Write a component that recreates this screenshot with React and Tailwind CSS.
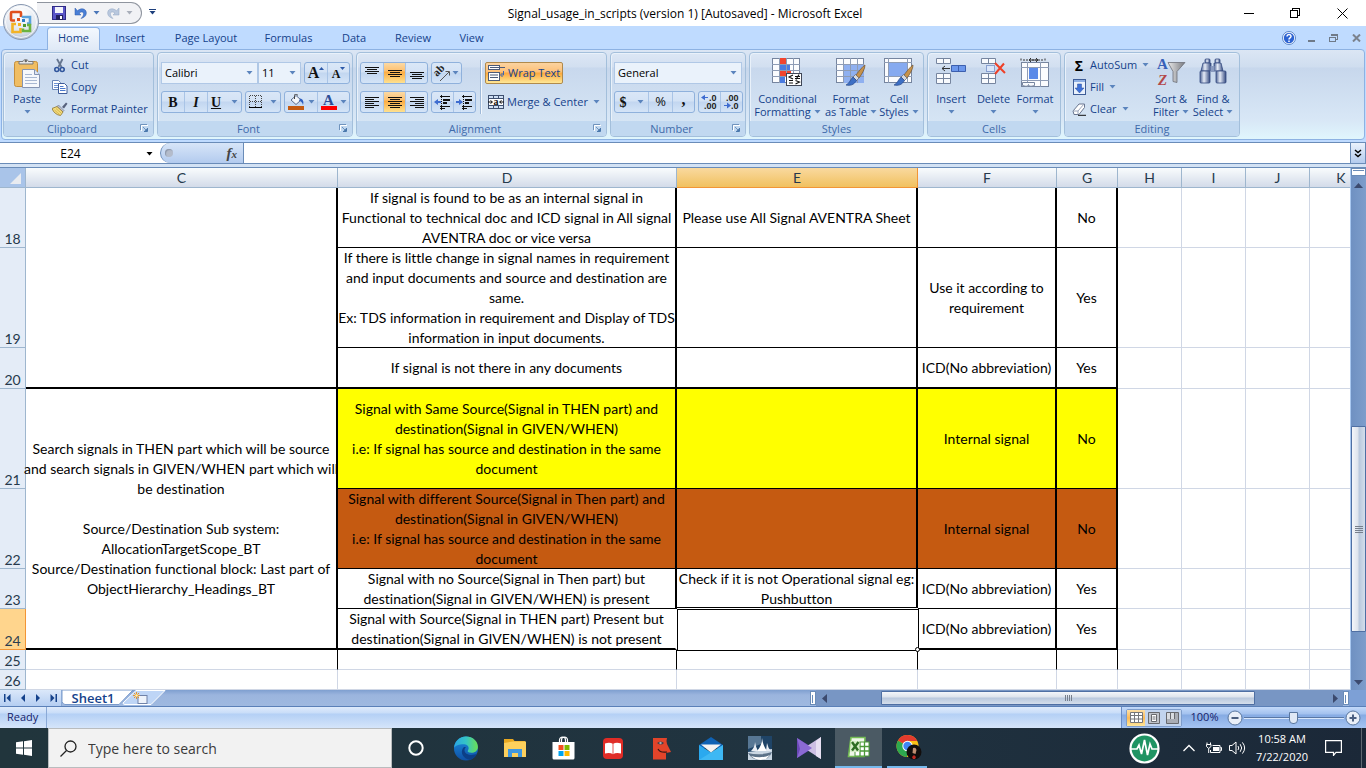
import React from "react";

const UI = "font-['Open_Sans','Noto_Sans',sans-serif]";

/* ---------- small shared pieces ---------- */
const Arrow = ({ className = "text-[#5b84bd]" }) => (
  <svg width="7" height="4" viewBox="0 0 7 4" className={"shrink-0 " + className} aria-hidden="true">
    <path d="M0.5 0h6L3.5 3.6z" fill="currentColor" />
  </svg>
);

const Launcher = ({ name }) => (
  <button aria-label={name + " settings"} className="mr-1 h-[9px] w-[9px]">
    <svg width="9" height="9" viewBox="0 0 9 9" fill="none" stroke="#6f93bd">
      <path d="M0.5 6V0.5H7M3 3l3 3" />
      <path d="M4 7.5h3.5V4" stroke="#4a78ac" />
      <path d="M4.5 7h2.5V4.5z" fill="#4a78ac" stroke="none" />
      <path d="M1.5 7V1.5H8" stroke="#fff" />
    </svg>
  </button>
);

const Group = ({ name, width, launcher, children }) => (
  <section
    aria-label={name}
    className={
      "flex h-[85px] shrink-0 flex-col overflow-hidden rounded-[4px] border border-[#a3bfdb] bg-[linear-gradient(#dce7f5_0,#d2dff0_14px,#c8d8ed_15px,#d9e8f6_100%)] shadow-[inset_1px_1px_0_#e9f1fa] " +
      width
    }
  >
    <div className="flex h-[68px]">{children}</div>
    <div className="flex h-[15px] items-center bg-[#c1d8f0] text-[#3e6aaa]">
      <span className="flex-1 text-center leading-[15px]">{name}</span>
      {launcher && <Launcher name={name} />}
    </div>
  </section>
);

const Segment = ({ className = "", children }) => (
  <div
    className={
      "flex h-[22px] overflow-hidden rounded-[3px] border border-[#8fb1dc] bg-[linear-gradient(#dae7f7_0,#d3e2f5_9px,#c2d6f0_10px,#d4e4f7_100%)] " +
      className
    }
  >
    {children}
  </div>
);

const Seg = ({ label, active, first, width = "w-[22px]", children }) => (
  <button
    aria-label={label}
    className={
      "flex h-full shrink-0 items-center justify-center gap-[3px] text-[#111] " +
      width +
      (first ? "" : " border-l border-[#a9c4e6]") +
      (active ? " bg-[linear-gradient(#fbd9a4_0,#fdc06f_8px,#fbab42_9px,#fee190_100%)]" : "")
    }
  >
    {children}
  </button>
);

const SmallButton = ({ icon, label, drop }) => (
  <button className="flex h-[22px] items-center gap-[3px] whitespace-nowrap">
    <span className="flex w-4 justify-center">{icon}</span>
    <span className="pr-[2px]">{label}</span>
    {drop && <Arrow />}
  </button>
);

const BigButton = ({ icon, lines, width }) => (
  <button className={"flex shrink-0 flex-col items-center pt-[5px] " + width}>
    <span className="flex h-[34px] items-start justify-center">{icon}</span>
    <span className="whitespace-nowrap leading-[13px]">{lines[0]}</span>
    <span className="flex h-[13px] items-center gap-[3px] whitespace-nowrap leading-[13px]">
      {lines[1]}
      <Arrow />
    </span>
  </button>
);

const Combo = ({ label, value, className }) => (
  <div className={"relative h-[22px] border border-[#b0c8e6] bg-[#eaf2fb] " + className}>
    <select aria-label={label} defaultValue={value} className="h-full w-full appearance-none bg-transparent pl-[3px] text-black outline-none">
      <option>{value}</option>
    </select>
    <span className="pointer-events-none absolute right-1 top-2">
      <Arrow />
    </span>
  </div>
);

const Lines = ({ rows, w = 14 }) => (
  <svg width={w} height="14" viewBox={"0 0 " + w + " 14"} shapeRendering="crispEdges" aria-hidden="true">
    {rows.map(([x, y, l], i) => (
      <rect key={i} x={x} y={y} width={l} height="1" fill="#111" />
    ))}
  </svg>
);

/* ---------- ribbon icons ---------- */
const PasteIcon = () => (
  <svg width="28" height="31" viewBox="0 0 28 31">
    <rect x="1.5" y="3.5" width="23" height="25" rx="2" fill="#f0bd62" stroke="#c58f3c" />
    <path d="M6 6V3.5h4C10 1 15 1 15.500 3.500H20V6z" fill="#e9e9e9" stroke="#777" />
    <circle cx="12.800" cy="3" r="1.200" fill="#666" />
    <path d="M9.500 11.500h12l5 5v13h-17z" fill="#f6f8fc" stroke="#8594b3" />
    <path d="M21.500 11.500v5h5" fill="#dfe6f2" stroke="#8594b3" />
    <path d="M12 16.500h7M12 19.500h12M12 22.500h12M12 25.500h12" stroke="#a9b8d2" />
  </svg>
);
const CutIcon = () => (
  <svg width="12" height="15" viewBox="0 0 12 15" fill="none">
    <path d="M3 1l4.500 8M8.500 1L4.500 9" stroke="#66768f" strokeWidth="1.800" />
    <circle cx="2.800" cy="11.500" r="2" stroke="#31569c" strokeWidth="1.600" />
    <circle cx="8.200" cy="11.500" r="2" stroke="#31569c" strokeWidth="1.600" />
  </svg>
);
const CopyIcon = () => (
  <svg width="16" height="14" viewBox="0 0 16 14">
    <path d="M.5.5h6l2 2v7h-8z" fill="#fff" stroke="#6b86b8" />
    <path d="M2 3.500h4M2 5.500h5M2 7.500h5" stroke="#6f93d4" />
    <path d="M6.500 3.500h6l2.500 2.500v7.500H6.500z" fill="#fff" stroke="#3e5c9a" />
    <path d="M8 6.500h3.500M8 8.500h5.500M8 10.500h5.500" stroke="#4a78cc" />
  </svg>
);
const BrushIcon = () => (
  <svg width="16" height="14" viewBox="0 0 16 14">
    <path d="M10 5l4-4.500 1.500 1.300L12 6.500z" fill="#56617c" />
    <path d="M6.500 3l5.500 5.500-1.500 1.500L5 4.500z" fill="#b9bfd0" stroke="#6b7285" strokeWidth=".6" />
    <path d="M5 4.500l6 5.500-2.500 3.500C4.500 13 1.500 10.500 0 6.500z" fill="#f3dc7c" stroke="#8d7430" strokeWidth=".8" />
    <path d="M2.500 8l5 4.500M4 6.500l5 4.500" stroke="#c8a641" strokeWidth=".7" />
  </svg>
);
const GridIcon = () => (
  <svg width="14" height="14" viewBox="0 0 14 14" shapeRendering="crispEdges" fill="none">
    <path d="M1 .5h12M1 6.500h12M.5 1v11M6.500 1v11M12.500 1v11" stroke="#444" strokeDasharray="1 1" />
    <path d="M0 12.500h13" stroke="#000" />
  </svg>
);
const BucketIcon = () => (
  <svg width="17" height="16" viewBox="0 0 17 16">
    <path d="M3 6l5-4.500 5 4.500-5 4.500z" fill="#f4f7fb" stroke="#5a6c8d" />
    <path d="M6.500 5V1.500a1.500 1.500 0 013 0" fill="none" stroke="#444" />
    <path d="M12 4.500c3 .5 4 3 3 6.500-1-3-2-4-4-4z" fill="#2e5fc0" />
    <rect y="12" width="16" height="4" fill="#c55a11" />
  </svg>
);
const FontColorIcon = () => (
  <span className="flex flex-col items-center font-['Liberation_Serif',serif] text-[15px] font-bold leading-[12px] text-[#2c4d96]">
    A
    <span className="h-[4px] w-4 bg-[#ff0000]" />
  </span>
);
const OrientIcon = () => (
  <svg width="17" height="17" viewBox="0 0 17 17" fill="none" className="overflow-visible">
    <text x="3" y="12" transform="rotate(-45 3 12)" fontFamily="Liberation Serif, serif" fontSize="11" fontWeight="bold" fill="#222">ab</text>
    <path d="M6 16l9-9M15.500 10.500V6.500h-4" stroke="#555" />
  </svg>
);
const IndentIcon = ({ right }) => (
  <svg width="17" height="15" viewBox="0 0 17 15" shapeRendering="crispEdges">
    <path d="M6 1.500h10M6 13.500h5M6 11.500h10" stroke="#111" />
    <path d="M9 5h7M9 8h4" stroke="#111" strokeWidth="2" />
    <path d="M7.500 0v15" stroke="#111" strokeDasharray="1 1" />
    <path d={right ? "M0 6h3V4l4 3-4 3V8H0z" : "M7 6H4V4L0 7l4 3V8h3z"} fill="#3e6cd0" shapeRendering="auto" />
  </svg>
);
const WrapIcon = () => (
  <svg width="17" height="16" viewBox="0 0 17 16" fill="none">
    <rect x=".5" y=".5" width="11" height="4" fill="#fff" stroke="#4b5a78" />
    <path d="M2 2.500h15" stroke="#4b5a78" />
    <rect x=".5" y="7.500" width="11" height="8" fill="#fff" stroke="#4b5a78" />
    <path d="M2 10h8M2 12.500h8" stroke="#4b5a78" strokeWidth="1.200" />
    <path d="M15.500 6v4h-2M14.500 8l-2 2 2 2" stroke="#3a65b5" />
  </svg>
);
const MergeIcon = () => (
  <svg width="16" height="14" viewBox="0 0 16 14">
    <rect x=".5" y=".5" width="15" height="13" fill="#cfe0f5" stroke="#3f506f" />
    <path d="M0 3.500h16M0 10.500h16M5.500 0v3M10.500 0v3M5.500 11v3M10.500 11v3" stroke="#3f506f" />
    <rect x="1" y="4" width="14" height="6" fill="#fff" />
    <path d="M0 7h4M12 7h4M2.500 5.500L4.500 7l-2 1.500M13.500 5.500L11.500 7l2 1.500" stroke="#111" fill="none" />
    <text x="5.500" y="9.500" fontFamily="Liberation Serif, serif" fontSize="10" fontWeight="bold" fill="#111">a</text>
  </svg>
);
const DecimalIcon = ({ inc }) => (
  <svg width="17" height="16" viewBox="0 0 17 16" fontFamily="Liberation Sans, sans-serif" fontSize="9" fontWeight="bold" fill="#222" className="overflow-visible">
    <text x={inc ? 8 : 3} y="7">{inc ? ".0" : ".00"}</text>
    <text x={inc ? 3 : 8} y="15">{inc ? ".00" : ".0"}</text>
    <path d={inc ? "M7 3H4V.8L0 3.500l4 2.700V4h3z" : "M1 11h3V8.500l4 3-4 3V12H1z"} fill="#3e6cd0" />
  </svg>
);
const SheetBase = ({ children, cols = [7.5, 14.5, 21.5], rows = [6.5, 12.5, 18.5] }) => (
  <>
    <rect x=".5" y=".5" width="27" height="24" fill="#fbfcfe" stroke="#76859f" />
    {children}
    <path d={cols.map((c) => `M${c} 0v25`).join("") + rows.map((r) => `M0 ${r}h28`).join("")} stroke="#8e9cb5" fill="none" />
  </>
);
const PaintBrush = () => (
  <g>
    <path d="M29 7c-2 1-6 6-9 10l3 3c3-4 6-9 6-13z" fill="#c7924b" stroke="#6d5230" strokeWidth=".7" />
    <path d="M19.500 16.500l3.500 3.500-2.500 2.500-3.500-3.500z" fill="#d6d8de" stroke="#5e6470" strokeWidth=".7" />
    <path d="M17 19l3.500 3.500C18 27 14 28 10 27c3-1 4-5 7-8z" fill="#3d6fc4" stroke="#28498a" strokeWidth=".7" />
  </g>
);
const CondIcon = () => (
  <svg width="31" height="29" viewBox="0 0 31 29">
    <SheetBase>
      <rect x="7" y="0" width="7" height="6" fill="#f2452e" />
      <rect x="7" y="6" width="11" height="6" fill="#4a7be0" />
      <rect x="7" y="12" width="12" height="6" fill="#f2452e" />
      <rect x="7" y="18" width="6" height="7" fill="#4a7be0" />
    </SheetBase>
    <rect x="14.500" y="15.500" width="15" height="12" fill="#fff" stroke="#3f4656" />
    <path d="M21 17l-4 2 4 2M17 22.500h4M17 25h4M23 18.500h5M23 20.500h5M27 16.500l-3 5M23.500 22.500l4 1.500-4 2" stroke="#111" fill="none" strokeWidth="1.100" />
  </svg>
);
const TableIcon = () => (
  <svg width="30" height="29" viewBox="0 0 30 29">
    <SheetBase>
      <rect x="7" y="7" width="21" height="18" fill="#8fb0f0" />
    </SheetBase>
    <PaintBrush />
  </svg>
);
const StylesIcon = () => (
  <svg width="30" height="29" viewBox="0 0 30 29">
    <SheetBase cols={[4.500, 23.500]} rows={[4.500, 18.500]}>
      <rect x="5" y="5" width="18" height="13" fill="#86aaf0" />
    </SheetBase>
    <PaintBrush />
  </svg>
);
const CellsPair = () => (
  <g fill="#f8fafd" stroke="#76859f">
    <path d="M.5.5h14v5H.5zM7.500.5v5M.5 15.500h14v10H.5zM7.500 15.500v10M.5 20.500h14" />
  </g>
);
const InsertIcon = () => (
  <svg width="31" height="28" viewBox="0 0 31 28">
    <CellsPair />
    <path d="M15.500 7.500h14v6h-14zM22.500 7.500v6" fill="#6b97ec" stroke="#3c5fae" />
    <path d="M6 10.500h8M9 8l-3 2.500L9 13" stroke="#333" fill="none" />
  </svg>
);
const DeleteIcon = () => (
  <svg width="25" height="28" viewBox="0 0 25 28">
    <CellsPair />
    <path d="M5.500 7.500h8v6h-8z" fill="#dbe7fa" stroke="#3c5fae" strokeDasharray="1 1" />
    <path d="M14 5l10 10M23 5.500L14 16" stroke="#ee4028" strokeWidth="2" />
  </svg>
);
const FormatIcon = () => (
  <svg width="31" height="30" viewBox="0 0 31 30">
    <path d="M1 .5v3M25 .5v3M3 2h20" stroke="#333" strokeDasharray="2 1" />
    <path d="M9 2h8M11 0L9 2l2 2M16 0l2 2-2 2" stroke="#333" fill="none" />
    <g transform="translate(1 4)">
      <SheetBase cols={[6.500, 19.500]} rows={[5.500, 18.500]}>
        <rect x="8" y="6" width="9" height="11" fill="#5b8ae8" />
      </SheetBase>
    </g>
    <path d="M2.500 27.500q6 2 6-1 0 3 6 1v-3h-12z" fill="#f8fafd" stroke="#76859f" />
  </svg>
);
const SortIcon = () => (
  <svg width="30" height="29" viewBox="0 0 30 29" className="overflow-visible">
    <defs>
      <linearGradient id="fun" x1="0" x2="1"><stop stopColor="#e8e8e8" /><stop offset="1" stopColor="#77797f" /></linearGradient>
    </defs>
    <text x="1" y="11" fontFamily="Liberation Serif, serif" fontSize="15" fontWeight="bold" fill="#3560b8">A</text>
    <text x="2" y="27" fontFamily="Liberation Serif, serif" fontSize="15" fontStyle="italic" fontWeight="bold" fill="#b34848">Z</text>
    <path d="M12 4.500h17l-8 9v11l-4-1v-10z" fill="url(#fun)" stroke="#6d7078" strokeWidth=".8" />
  </svg>
);
const BinocIcon = () => (
  <svg width="28" height="27" viewBox="0 0 28 27">
    <defs>
      <linearGradient id="bin" x1="0" x2="1"><stop stopColor="#4c6294" /><stop offset=".4" stopColor="#e6ecf7" /><stop offset="1" stopColor="#344a80" /></linearGradient>
    </defs>
    {[0, 15].map((x) => (
      <g key={x} transform={`translate(${x} 0)`} fill="url(#bin)" stroke="#344a80" strokeWidth=".8">
        <rect x={x ? 1 : 6} y="1" width="5" height="4" rx="1" />
        <path d={x ? "M0 5h7l2 8H0z" : "M4 5h8v8H2z"} />
        <rect x={x ? 2 : 1} y="13" width="10" height="12" rx="1" />
      </g>
    ))}
    <rect x="11.500" y="8" width="4" height="6" fill="#8a9bc0" />
  </svg>
);
const FillIcon = () => (
  <svg width="13" height="16" viewBox="0 0 13 16">
    <rect x=".5" y=".5" width="12" height="15" fill="#e9f1fc" stroke="#3d5c97" />
    <path d="M1 2h11" stroke="#8fb0e4" strokeWidth="2" />
    <path d="M4.500 5h4v4h2.500l-4.500 5L2 9h2.500z" fill="#3f72d8" stroke="#2a4f9d" strokeWidth=".5" />
  </svg>
);
const EraserIcon = () => (
  <svg width="14" height="13" viewBox="0 0 14 13">
    <path d="M1 8l6-7h5.500v3.500L7 11.500H2z" fill="#fff" stroke="#6a7690" />
    <path d="M1 8h5l6-7M6 8v3.500" stroke="#9aa5bb" fill="none" />
    <path d="M6 12.300h8" stroke="#111" />
  </svg>
);

/* ---------- top area ---------- */
const OfficeButton = () => (
  <button aria-label="Office Button" className="absolute left-[2px] top-[3px] z-20 h-[38px] w-[38px]">
    <svg width="38" height="38" viewBox="0 0 38 38" fill="none">
      <defs>
        <radialGradient id="orb" cx=".5" cy=".25" r=".9"><stop stopColor="#fff" /><stop offset=".6" stopColor="#dfe5ee" /><stop offset="1" stopColor="#8e9fb8" /></radialGradient>
      </defs>
      <circle cx="19" cy="19" r="17.500" fill="url(#orb)" stroke="#8797b0" />
      <circle cx="19" cy="19" r="15.500" stroke="#fff" opacity=".8" />
      <g strokeWidth="2.600">
        <path d="M13 17.500H10a1 1 0 01-1-1V10a1 1 0 011-1h8a1 1 0 011 1v4" stroke="#e0501d" />
        <path d="M21 15v-1h7v6.500h-3" stroke="#5aa2dc" />
        <path d="M14 21h-3.500v8h8v-4" stroke="#f3b325" />
        <path d="M21 25.500v2.500h7v-6h-3" stroke="#6cb33f" />
      </g>
      <g>
        <rect x="15" y="15" width="3" height="3" fill="#e0501d" />
        <rect x="20" y="16" width="3" height="3" fill="#2f7dc8" />
        <rect x="16" y="20" width="3" height="3" fill="#f3b325" />
        <rect x="21" y="21" width="3" height="3" fill="#4e9a2e" />
      </g>
    </svg>
  </button>
);

const TitleBar = () => (
  <header className="relative flex h-[26px] shrink-0 items-start bg-white">
    <OfficeButton />
    <div className="ml-[37px] mt-[2px] flex h-[22px] w-[105px] items-center rounded-r-full rounded-tl-none border border-l-0 border-[#8f959f] bg-[#f1f2f5] pl-[15px]">
      <button aria-label="Save" className="mr-2">
        <svg width="14" height="14" viewBox="0 0 14 14">
          <rect x=".5" y=".5" width="13" height="13" fill="#5a55c8" stroke="#2f2b86" />
          <rect x="3" y="1" width="8" height="6" fill="#f2f3fb" />
          <rect x="4" y="9" width="7" height="5" fill="#23205e" />
          <rect x="8" y="10" width="2" height="3" fill="#fff" />
        </svg>
      </button>
      <button aria-label="Undo" className="flex items-center gap-[6px]">
        <svg width="13" height="12" viewBox="0 0 13 12"><path d="M1 1v7h6L5 6c3-2 5-1 4.500 1.500C9.200 9 8.500 10 7 11.500c4-1 5.500-3.500 5.300-6C12 1.500 7 .5 3.500 3.800z" fill="#4a7fd6" stroke="#2d59a8" strokeWidth=".5" /></svg>
        <Arrow className="text-[#4a76b8]" />
      </button>
      <button aria-label="Redo" className="ml-[7px] flex items-center gap-[6px]">
        <svg width="13" height="12" viewBox="0 0 13 12"><path d="M12 1v7H6l2-2C5 4 3 5 3.500 7.500c.3 1.500 1 2.500 2.500 4C2 10.500.5 8 .7 5.500 1 1.500 6 .5 9.500 3.800z" fill="#b9c8de" stroke="#93a6c2" strokeWidth=".5" /></svg>
        <Arrow className="text-[#a9afba]" />
      </button>
    </div>
    <button aria-label="Customize Quick Access Toolbar" className="ml-[7px] mt-[9px] flex flex-col gap-px text-[#1d3f7c]">
      <span className="h-px w-[7px] bg-[#1d3f7c]" />
      <Arrow className="text-[#1d3f7c]" />
    </button>
    <h1 className="absolute inset-x-0 top-0 pl-1 text-center text-[12px] leading-[27px] text-black">
      Signal_usage_in_scripts (version 1) [Autosaved] - Microsoft Excel
    </h1>
    <div className="relative ml-auto flex h-full items-center">
      <button aria-label="Minimize" className="flex h-full w-[46px] items-center justify-center">
        <span className="h-px w-[10px] bg-black" />
      </button>
      <button aria-label="Restore" className="flex h-full w-[46px] items-center justify-center">
        <svg width="10" height="10" viewBox="0 0 10 10" fill="none" stroke="#000" shapeRendering="crispEdges"><path d="M.5 2.500h7v7h-7zM2.500 2V.5h7v7H8" /></svg>
      </button>
      <button aria-label="Close" className="flex h-full w-[48px] items-center justify-center">
        <svg width="11" height="11" viewBox="0 0 11 11" stroke="#000"><path d="M.5.5l10 10M10.500.5l-10 10" /></svg>
      </button>
    </div>
  </header>
);

const TABS = [
  ["Home", "w-[53px]"],
  ["Insert", "w-[60px]"],
  ["Page Layout", "w-[92px]"],
  ["Formulas", "w-[73px]"],
  ["Data", "w-[58px]"],
  ["Review", "w-[60px]"],
  ["View", "w-[57px]"],
];

const TabBar = () => (
  <nav aria-label="Ribbon tabs" className="flex h-[23px] shrink-0 items-end bg-[#bfdbff] pl-[47px] pr-1 text-[#15428b]">
    {TABS.map(([t, w], i) => (
      <button
        key={t}
        className={
          "relative whitespace-nowrap text-center " +
          w +
          (i === 0
            ? " z-10 -mb-px h-[23px] rounded-t-[4px] border border-b-0 border-[#8db2e3] bg-[linear-gradient(#f3f8fe,#dfe9f6)] pb-[3px] leading-[19px]"
            : " h-[22px] leading-[20px]")
        }
      >
        {t}
      </button>
    ))}
    <div className="ml-auto flex h-full items-center text-[#6f7a88]">
      <button aria-label="Help" className="mr-[12px] flex">
        <svg width="14" height="14" viewBox="0 0 14 14">
          <circle cx="7" cy="7" r="6.500" fill="#fff" stroke="#5b86c8" />
          <circle cx="7" cy="7" r="5.200" fill="#2d63d2" />
          <path d="M5 5.500C5 2.800 9.200 3 9 5.500 8.800 7 7 6.800 7 8.500M7 9.500v1.600" stroke="#fff" strokeWidth="1.500" fill="none" />
        </svg>
      </button>
      <button aria-label="Minimize workbook" className="mr-[14px] mt-[6px] h-[2px] w-[7px] bg-[#6f7a88]" />
      <button aria-label="Restore workbook" className="mr-[14px]">
        <svg width="9" height="8" viewBox="0 0 9 8" fill="none" stroke="#6f7a88" shapeRendering="crispEdges"><path d="M.5 3.500h6v4h-6zM.5 3h6M2 .5h6.500v5H7M2 1h6.500" /></svg>
      </button>
      <button aria-label="Close workbook" className="mr-px">
        <svg width="9" height="8" viewBox="0 0 9 8" stroke="#7b828d" strokeWidth="2"><path d="M1 .5l7 7M8 .5l-7 7" /></svg>
      </button>
    </div>
  </nav>
);

const Ribbon = () => (
  <div className="shrink-0 bg-[#bfdbff] px-px pb-[2px]">
    <div className="flex h-[91px] gap-[3px] overflow-hidden rounded-[4px] border border-[#8db2e3] bg-[linear-gradient(#dbe6f4_0,#cfddef_17px,#c7d7ec_18px,#d8e7f6_70px,#e0f6fd_100%)] pl-px pt-[2px] text-[#15428b]">
      <Group name="Clipboard" width="w-[151px]" launcher>
        <BigButton width="w-[46px]" icon={<PasteIcon />} lines={["Paste", ""]} />
        <div className="ml-[2px] flex flex-col pt-px">
          <SmallButton icon={<CutIcon />} label="Cut" />
          <SmallButton icon={<CopyIcon />} label="Copy" />
          <SmallButton icon={<BrushIcon />} label="Format Painter" />
        </div>
      </Group>

      <Group name="Font" width="w-[196px]" launcher>
        <div className="flex flex-col gap-[7px] pl-[3px] pt-[9px]">
          <div className="flex">
            <Combo label="Font" value="Calibri" className="w-[97px]" />
            <Combo label="Font size" value="11" className="w-[43px]" />
            <Segment className="ml-[3px]">
              <Seg first label="Increase font size">
                <span className="font-['Liberation_Serif',serif] text-[16px] font-bold leading-none">A</span>
                <svg width="5" height="3" viewBox="0 0 5 3" className="-ml-[3px] -mt-[10px]"><path d="M0 3h5L2.500 0z" fill="#2d59a8" /></svg>
              </Seg>
              <Seg label="Decrease font size">
                <span className="pt-[2px] font-['Liberation_Serif',serif] text-[12px] font-bold leading-none">A</span>
                <svg width="5" height="3" viewBox="0 0 5 3" className="-ml-[3px] -mt-[10px]"><path d="M0 0h5L2.500 3z" fill="#2d59a8" /></svg>
              </Seg>
            </Segment>
          </div>
          <div className="flex gap-[3px] font-['Liberation_Serif',serif] text-[14px] font-bold">
            <Segment>
              <Seg first label="Bold">B</Seg>
              <Seg label="Italic" width="w-[23px]"><i>I</i></Seg>
              <Seg label="Underline" width="w-[34px]"><u>U</u><span className="w-1" /><Arrow /></Seg>
            </Segment>
            <Segment>
              <Seg first label="Borders" width="w-[34px]"><GridIcon /><span className="w-px" /><Arrow /></Seg>
            </Segment>
            <Segment>
              <Seg first label="Fill colour" width="w-[32px]"><BucketIcon /><Arrow /></Seg>
              <Seg label="Font colour" width="w-[32px]"><FontColorIcon /><Arrow /></Seg>
            </Segment>
          </div>
        </div>
      </Group>

      <Group name="Alignment" width="w-[251px]" launcher>
        <div className="flex flex-col gap-[7px] pl-[3px] pt-[9px]">
          <div className="flex gap-[3px]">
            <Segment>
              <Seg first label="Top align"><Lines rows={[[0, 1, 14], [2, 3, 10], [0, 5, 14], [2, 7, 10]]} /></Seg>
              <Seg active label="Middle align"><Lines rows={[[0, 4, 14], [2, 6, 10], [0, 8, 14], [2, 10, 10]]} /></Seg>
              <Seg label="Bottom align"><Lines rows={[[0, 6, 14], [2, 8, 10], [0, 10, 14], [2, 12, 10]]} /></Seg>
            </Segment>
            <Segment><Seg first label="Orientation" width="w-[29px]"><OrientIcon /><Arrow className="-ml-[2px] text-[#5b84bd]" /></Seg></Segment>
          </div>
          <div className="flex gap-[3px]">
            <Segment>
              <Seg first label="Align left"><Lines rows={[[0, 2, 14], [0, 4, 9], [0, 6, 14], [0, 8, 9], [0, 10, 14], [0, 12, 9]]} /></Seg>
              <Seg active label="Centre"><Lines rows={[[0, 2, 14], [2, 4, 10], [0, 6, 14], [2, 8, 10], [0, 10, 14], [2, 12, 10]]} /></Seg>
              <Seg label="Align right"><Lines rows={[[0, 2, 14], [5, 4, 9], [0, 6, 14], [5, 8, 9], [0, 10, 14], [5, 12, 9]]} /></Seg>
            </Segment>
            <Segment>
              <Seg first label="Decrease indent" width="w-[21px]"><IndentIcon /></Seg>
              <Seg label="Increase indent"><IndentIcon right /></Seg>
            </Segment>
          </div>
        </div>
        <div className="ml-1 mt-[7px] h-[54px] w-px bg-[#9fb9d8] shadow-[1px_0_0_#f4f8fd]" />
        <div className="ml-[4px] flex flex-col items-start gap-[7px] pt-[9px]">
          <button className="flex h-[22px] items-center gap-[3px] whitespace-nowrap rounded-[2px] border border-[#b08a4c] bg-[linear-gradient(#fbd3a0_0,#fdc077_9px,#fca83c_10px,#fee796_100%)] px-[2px]">
            <WrapIcon />
            Wrap Text
          </button>
          <button className="flex h-[22px] items-center gap-[3px] whitespace-nowrap pl-[3px]">
            <MergeIcon />
            Merge &amp; Center
            <Arrow className="ml-[2px] text-[#5b84bd]" />
          </button>
        </div>
      </Group>

      <Group name="Number" width="w-[136px]" launcher>
        <div className="flex flex-col gap-[7px] pl-[3px] pt-[9px]">
          <Combo label="Number format" value="General" className="w-[128px]" />
          <div className="flex gap-[3px]">
            <Segment>
              <Seg first label="Currency" width="w-[33px]"><b className="font-['Liberation_Serif',serif] text-[14px]">$</b><span className="w-1" /><Arrow /></Seg>
              <Seg label="Percent" width="w-[24px]"><span className="text-[13px]">%</span></Seg>
              <Seg label="Comma"><b className="pb-1 font-['Liberation_Serif',serif] text-[16px] leading-[16px]">,</b></Seg>
            </Segment>
            <Segment>
              <Seg first label="Increase decimal" width="w-[21px]"><DecimalIcon inc /></Seg>
              <Seg label="Decrease decimal"><DecimalIcon /></Seg>
            </Segment>
          </div>
        </div>
      </Group>

      <Group name="Styles" width="w-[175px]">
        <BigButton width="w-[75px]" icon={<CondIcon />} lines={["Conditional", "Formatting"]} />
        <BigButton width="w-[52px]" icon={<TableIcon />} lines={["Format", "as Table"]} />
        <BigButton width="w-[44px]" icon={<StylesIcon />} lines={["Cell", "Styles"]} />
      </Group>

      <Group name="Cells" width="w-[134px]">
        <BigButton width="w-[46px]" icon={<InsertIcon />} lines={["Insert", ""]} />
        <BigButton width="w-[39px]" icon={<DeleteIcon />} lines={["Delete", ""]} />
        <BigButton width="w-[44px]" icon={<FormatIcon />} lines={["Format", ""]} />
      </Group>

      <Group name="Editing" width="w-[176px]">
        <div className="flex w-[85px] flex-col pl-[6px] pt-px">
          <SmallButton icon={<b className="text-[14px] text-black">Σ</b>} label="AutoSum" drop />
          <SmallButton icon={<FillIcon />} label="Fill" drop />
          <SmallButton icon={<EraserIcon />} label="Clear" drop />
        </div>
        <BigButton width="w-[42px]" icon={<SortIcon />} lines={["Sort &", "Filter"]} />
        <BigButton width="w-[42px]" icon={<BinocIcon />} lines={["Find &", "Select"]} />
      </Group>
    </div>
  </div>
);

const FormulaBar = () => (
  <div className="shrink-0 border-t border-[#6a8cb8] bg-[#d3e2f4] pb-[3px]">
    <div className="flex h-[21px] border-b border-[#6a8cb8] bg-white">
      <div className="relative w-[160px]">
        <input aria-label="Name box" defaultValue="E24" className="h-full w-[141px] bg-transparent text-center text-[12px] text-black outline-none" />
        <span className="absolute right-[7px] top-[9px]"><Arrow className="text-black" /></span>
      </div>
      <div className="flex w-[84px] items-center justify-between rounded-l-full border-l border-r border-[#6a8cb8] bg-[linear-gradient(#d7e5f8,#b3cbee)] pl-1 pr-1">
        <span className="h-2 w-2 rounded-full bg-[#b4bccb] shadow-[inset_1px_1px_1px_#8c97aa]" />
        <button aria-label="Insert function" className="pr-[2px] font-['Liberation_Serif',serif] text-[15px] italic leading-none text-[#444]">
          <b>f</b><span className="text-[11px]"><b>x</b></span>
        </button>
      </div>
      <input aria-label="Formula bar" className="min-w-0 flex-1 bg-white px-1 outline-none" />
      <button aria-label="Expand formula bar" className="flex w-4 items-center justify-center border-x border-[#6a8cb8] bg-[linear-gradient(#eaf2fc,#b3cbee)]">
        <svg width="8" height="9" viewBox="0 0 8 9" fill="none" stroke="#000" strokeWidth="1.500"><path d="M1 1l3 2.500L7 1M1 5l3 2.500L7 5" /></svg>
      </button>
    </div>
  </div>
);

/* ---------- worksheet ---------- */
const T = ({ lines }) => (
  <div className="-mb-px flex flex-col items-center whitespace-nowrap">
    {lines.map((l, i) => (
      <span key={i} className="h-[20px]">{l}</span>
    ))}
  </div>
);

const ICD = ["ICD(No abbreviation)"];
const YELLOW = "bg-[#ffff00]";
const BROWN = "bg-[#c55a11]";

const ROWS = [
  { n: 18, h: "h-[60px]", d: ["If signal is found to be as an internal signal in", "Functional to technical doc and ICD signal in All signal", "AVENTRA doc or vice versa"], e: ["Please use All Signal AVENTRA Sheet"], f: [], g: "No" },
  { n: 19, h: "h-[100px]", d: ["If there is little change in signal names in requirement", "and input documents and source and destination are", "same.", "Ex: TDS information in requirement and Display of TDS", "information in input documents."], e: [], f: ["Use it according to", "requirement"], g: "Yes" },
  { n: 20, h: "h-[41px]", thick: true, d: ["If signal is not there in any documents"], e: [], f: ICD, g: "Yes" },
  { n: 21, h: "h-[100px]", fill: YELLOW, d: ["Signal with Same Source(Signal in THEN part) and", "destination(Signal in GIVEN/WHEN)", "i.e: If signal has source and destination in the same", "document"], e: [], f: ["Internal signal"], g: "No" },
  { n: 22, h: "h-[80px]", fill: BROWN, d: ["Signal with different Source(Signal in Then part) and", "destination(Signal in GIVEN/WHEN)", "i.e: If signal has source and destination in the same", "document"], e: [], f: ["Internal signal"], g: "No" },
  { n: 23, h: "h-[40px]", d: ["Signal with no Source(Signal in Then part) but", "destination(Signal in GIVEN/WHEN) is present"], e: ["Check if it is not Operational signal eg:", "Pushbutton"], f: ICD, g: "Yes" },
  { n: 24, h: "h-[41px]", thick: true, selected: true, d: ["Signal with Source(Signal in THEN part) Present but", "destination(Signal in GIVEN/WHEN) is not present"], e: [], f: ICD, g: "Yes" },
];

const C_TEXT = [
  "Search signals in THEN part which will be source",
  "and search signals in GIVEN/WHEN part which will",
  "be destination",
  "",
  "Source/Destination Sub system:",
  "AllocationTargetScope_BT",
  "Source/Destination functional block: Last part of",
  "ObjectHierarchy_Headings_BT",
];

const RowHead = ({ n, selected }) => (
  <th
    scope="row"
    className={
      "border-b border-r p-0 align-bottom font-normal leading-[17px] " +
      (selected ? "border-[#f29536] bg-[#ffd58d] text-[#2b3d4f]" : "border-[#9eb6ce] bg-[#e4ecf7] text-[#26394c]")
    }
  >
    {n}
  </th>
);

const GRID = "border-b border-r border-[#d0d7e5] p-0";

const Sheet = () => (
  <div className="min-w-0 flex-1 overflow-hidden bg-white">
    <table className="w-full table-fixed border-separate border-spacing-0 text-center font-['Lato','Carlito',sans-serif] text-[14px] leading-[20px] text-black [font-variant-ligatures:none]">
      <colgroup>
        <col className="w-[26px]" />
        <col className="w-[312px]" />
        <col className="w-[339px]" />
        <col className="w-[241px]" />
        <col className="w-[139px]" />
        <col className="w-[61px]" />
        <col className="w-[64px]" />
        <col className="w-[64px]" />
        <col className="w-[64px]" />
        <col />
      </colgroup>
      <thead>
        <tr className="h-[20px]">
          <th className="border-b border-r border-[#9eb6ce] bg-[#a9c4e9] p-0 leading-none">
            <button aria-label="Select all" className="flex h-[18px] w-full items-end justify-end pb-[3px] pr-1">
              <svg width="11" height="11" viewBox="0 0 11 11"><path d="M11 0v11H0z" fill="#e8ebf0" /></svg>
            </button>
          </th>
          {["C", "D", "E", "F", "G", "H", "I", "J", "K"].map((c) => (
            <th
              key={c}
              scope="col"
              className={
                "h-[20px] border-b border-r p-0 font-normal leading-[19px] " +
                (c === "E" ? "border-[#f29536] bg-[linear-gradient(#f9d99f,#f1c15f)] text-[#26394c]" : "border-[#9eb6ce] bg-[linear-gradient(#f9fcfd,#d3dbe9)] text-[#26394c]") +
                (c === "K" ? " border-r-0 pl-[22px]" : "")
              }
            >
              {c}
            </th>
          ))}
        </tr>
      </thead>
      <tbody>
        {ROWS.map((r) => {
          const b = "relative border-black p-0 " + (r.thick ? "border-b-2 " : "border-b ") + (r.fill || "");
          return (
            <tr key={r.n} className={r.h}>
              <RowHead n={r.n} selected={r.selected} />
              {r.n === 18 && <td rowSpan={3} className="border-b-2 border-r-2 border-black p-0" />}
              {r.n === 21 && (
                <td rowSpan={4} className="relative z-10 border-b-2 border-r-2 border-black p-0">
                  <T lines={C_TEXT} />
                </td>
              )}
              <td className={b + " border-r-2" + (r.selected ? " border-r-white" : "")}><T lines={r.d} /></td>
              {r.selected ? (
                <td className="relative bg-white p-0">
                  <span className="absolute -bottom-px -right-px left-0 top-0 border border-black" />
                  <span className="absolute -top-px left-0 h-px w-full bg-white" />
                  <span className="absolute -top-[2px] left-0 h-px w-full bg-black" />
                  <span className="absolute -bottom-[2px] -right-[2px] z-10 h-[5px] w-[5px] rounded-full border border-black bg-white" />
                </td>
              ) : (
                <td className={b + " border-r-2"}><T lines={r.e} /></td>
              )}
              <td className={b + " border-r-2"}><T lines={r.f} /></td>
              <td className={b + " border-r-2"}><T lines={[r.g]} /></td>
              <td className={GRID} />
              <td className={GRID} />
              <td className={GRID} />
              <td className={GRID + " border-r-0"} />
            </tr>
          );
        })}
        {[25, 26].map((n) => (
          <tr key={n} className="h-[20px]">
            <RowHead n={n} />
            {[0, 1, 2, 3, 4, 5, 6, 7, 8].map((c) => (
              <td key={c} className={GRID + (n === 25 && c < 5 ? " border-r-black" : "") + (c === 8 ? " border-r-0" : "")} />
            ))}
          </tr>
        ))}
      </tbody>
    </table>
  </div>
);

const VScroll = () => (
  <div aria-label="Vertical scroll" className="flex w-[16px] shrink-0 flex-col items-center border-l border-[#a9c8f0] bg-[linear-gradient(90deg,#6f91c2,#7d9dcb)]">
    <div className="h-2 w-full border border-[#6a8cb8] bg-white p-px"><div className="h-[2px] border-t border-[#6a8cb8]" /></div>
    <button aria-label="Scroll up" className="flex h-[18px] items-center"><svg width="9" height="5" viewBox="0 0 9 5"><path d="M4.500 0L9 5H0z" fill="#3c4a6e" /></svg></button>
    <div className="flex-[233]" />
    <div className="flex w-[15px] flex-[205] items-center justify-center rounded-[1px] border border-[#4f6fa3] bg-[linear-gradient(90deg,#f4f6fa_0,#dde3ec_6px,#b9c8dd_7px,#d4deeb_100%)]">
      <div className="flex w-2 flex-col gap-px">
        <i className="h-px bg-[#777f8c]" /><i className="h-px bg-[#777f8c]" /><i className="h-px bg-[#777f8c]" /><i className="h-px bg-[#777f8c]" />
      </div>
    </div>
    <div className="flex-[43]" />
    <button aria-label="Scroll down" className="flex h-[15px] items-center"><svg width="9" height="5" viewBox="0 0 9 5"><path d="M4.500 5L9 0H0z" fill="#3c4a6e" /></svg></button>
  </div>
);

const NavBtn = ({ label, d }) => (
  <button aria-label={label} className="flex flex-1 items-center justify-center">
    <svg width="8" height="8" viewBox="0 0 8 8"><path d={d} fill="#15428b" /></svg>
  </button>
);

const SheetTabs = () => (
  <div className="flex h-[17px] shrink-0 border-b border-[#5b80b8] bg-[linear-gradient(#7f9fd0_0,#9bb5de_5px,#9fb9e0_100%)]">
    <div className="flex w-[62px] items-center border-r border-[#8aa9d6] bg-[linear-gradient(#dbe8fa,#b5cef2)]">
      <NavBtn label="First sheet" d="M0 0h1.500v8H0zM6.500 0v8l-4-4z" />
      <NavBtn label="Previous sheet" d="M6 0v8L2 4z" />
      <NavBtn label="Next sheet" d="M2 0v8l4-4z" />
      <NavBtn label="Last sheet" d="M6.500 0H8v8H6.500zM1.500 0v8l4-4z" />
    </div>
    <div className="relative flex w-[104px]">
      <svg width="104" height="16" viewBox="0 0 104 16" className="absolute inset-0" aria-hidden="true">
        <path d="M0 0h71L57 14.500H3q-2 0-3-3z" fill="#fff" stroke="#7b9bcb" />
        <path d="M61 13L74 .5h29L89 14.500H63q-2 0-2-1.500z" fill="#bed5f6" stroke="#fff" />
      </svg>
      <button className="relative w-[62px] text-center text-[13px] font-semibold leading-[16px] text-[#15428b]">Sheet1</button>
      <button aria-label="Insert worksheet" className="relative ml-[9px]">
        <svg width="15" height="13" viewBox="0 0 15 13">
          <rect x="5" y="3.500" width="9" height="8" fill="#eef3fb" stroke="#7082a8" />
          <path d="M3.500 0v7M0 3.500h7M1 1l5 5M6 1L1 6" stroke="#e9952a" />
          <circle cx="3.500" cy="3.500" r="1.300" fill="#fff3b0" />
        </svg>
      </button>
    </div>
    <div className="flex-[646]" />
    <div className="my-px w-[6px] border border-[#6a8cb8] bg-white"><div className="ml-px mt-[3px] h-2 w-px bg-[#6a8cb8]" /></div>
    <div className="flex flex-[528] items-center bg-[#7896c4]">
      <button aria-label="Scroll left" className="flex w-4 justify-center"><svg width="5" height="9" viewBox="0 0 5 9"><path d="M0 4.500L5 0v9z" fill="#3c4a6e" /></svg></button>
      <div className="flex-[49]" />
      <div className="flex h-[14px] flex-[372] items-center justify-center gap-px rounded-[1px] border border-[#4f6fa3] bg-[linear-gradient(#f4f6fa_0,#dde3ec_5px,#b9c8dd_6px,#d4deeb_100%)]">
        <i className="h-[6px] w-px bg-[#777f8c]" /><i className="h-[6px] w-px bg-[#777f8c]" /><i className="h-[6px] w-px bg-[#777f8c]" /><i className="h-[6px] w-px bg-[#777f8c]" />
      </div>
      <div className="flex-[72]" />
      <button aria-label="Scroll right" className="flex w-4 justify-center"><svg width="5" height="9" viewBox="0 0 5 9"><path d="M5 4.500L0 0v9z" fill="#3c4a6e" /></svg></button>
    </div>
    <div className="my-px w-[6px] border border-[#6a8cb8] bg-white"><div className="ml-px mt-[3px] h-2 w-px bg-[#6a8cb8]" /></div>
    <div className="w-[17px] bg-[#7da0d6]" />
  </div>
);

const StatusBar = () => (
  <footer className="flex h-[21px] shrink-0 bg-[linear-gradient(#dfebfb_0,#c9ddf8_6px,#b4d0f5_7px,#d5e5fa_100%)] text-[11px] text-[#15226b]">
    <div className="w-[47px] border-r border-[#8aa9d6] pl-[7px] leading-[20px]">Ready</div>
    <div className="flex-1" />
    <div className="flex w-[245px] items-center border-l border-[#6a8cc4] bg-[linear-gradient(#c3dafa_0,#a3c1ee_7px,#86abe3_8px,#a5c4f2_100%)] pl-[4px]">
      <div className="flex h-[18px] rounded-[2px] border border-[#7e9dcb]">
        <button aria-label="Normal view" className="flex w-[18px] items-center justify-center bg-[linear-gradient(#fde0a8,#fdb955_50%,#fee79c)]">
          <svg width="13" height="11" viewBox="0 0 13 11"><path d="M.5.500h12v10H.5zM4.500 0v11M8.500 0v11M0 3.500h13M0 7h13" fill="#fff" stroke="#76777a" /></svg>
        </button>
        <button aria-label="Page layout view" className="flex w-[18px] items-center justify-center bg-[#c2d4ee]">
          <svg width="12" height="12" viewBox="0 0 12 12"><path d="M.5.500h11v11H.5z" fill="#bfc3ca" stroke="#67696e" /><path d="M3.500 2.500h5v7h-5z" fill="#fff" stroke="#67696e" /><path d="M4.500 5h3M4.500 7h3" stroke="#67696e" /></svg>
        </button>
        <button aria-label="Page break preview" className="flex w-[18px] items-center justify-center bg-[#c2d4ee]">
          <svg width="13" height="12" viewBox="0 0 13 12"><path d="M.5.500h12v11H.5z" fill="#d9dce1" stroke="#67696e" /><path d="M1 7h7V1h4v10H1z" fill="#a9adb5" /><path d="M4.500 1v6M8.500 1v6" stroke="#67696e" /></svg>
        </button>
      </div>
      <span className="w-[45px] text-center">100%</span>
      <button aria-label="Zoom out" className="flex shrink-0">
        <svg width="16" height="16" viewBox="0 0 16 16"><circle cx="8" cy="8" r="7" fill="#e9eff8" stroke="#58769f" /><path d="M4.500 8h7" stroke="#4b5f80" strokeWidth="2" /></svg>
      </button>
      <input
        type="range"
        aria-label="Zoom"
        defaultValue="49"
        className="mx-px h-4 w-[100px] appearance-none bg-[linear-gradient(transparent_7px,#5877a5_7px,#5877a5_8px,#d9e7fb_8px,#d9e7fb_9px,transparent_9px)] [&::-webkit-slider-thumb]:h-[12px] [&::-webkit-slider-thumb]:w-[9px] [&::-webkit-slider-thumb]:appearance-none [&::-webkit-slider-thumb]:rounded-b-[4px] [&::-webkit-slider-thumb]:border [&::-webkit-slider-thumb]:border-[#58769f] [&::-webkit-slider-thumb]:bg-[#dfe8f5]"
      />
      <button aria-label="Zoom in" className="flex shrink-0">
        <svg width="16" height="16" viewBox="0 0 16 16"><circle cx="8" cy="8" r="7" fill="#e9eff8" stroke="#58769f" /><path d="M4.500 8h7M8 4.500v7" stroke="#4b5f80" strokeWidth="2" /></svg>
      </button>
    </div>
  </footer>
);

/* ---------- taskbar ---------- */
const EdgeIcon = () => (
  <svg width="24" height="25" viewBox="0 0 24 25">
    <defs>
      <linearGradient id="eg" x1="0" x2="1"><stop stopColor="#2aa6e4" /><stop offset=".5" stopColor="#35c4c6" /><stop offset="1" stopColor="#6bdf52" /></linearGradient>
      <linearGradient id="eb" x1="0" y1="0" x2="0" y2="1"><stop stopColor="#1b8fe0" /><stop offset="1" stopColor="#0f4fa3" /></linearGradient>
    </defs>
    <circle cx="12" cy="12.500" r="12" fill="url(#eb)" />
    <path d="M.1 12C.5 5 6 .5 12 .5c7 0 12 5 11.900 10.500-.1 4-3.400 5.800-6.400 5.800-3.300 0-4.500-1.300-3.500-2.600 1.700-2.200.3-5.700-3.800-6C6 8 1 9.500.1 12z" fill="url(#eg)" />
    <path d="M9 12c-3 5 0 10.500 7 12 3-.8 6-3.500 7-6.500-4 2.500-12 2-12.500-3 0-1.500.5-2.500 1.500-3.200-1-.8-2.500 0-3 .7z" fill="#0c3f87" />
  </svg>
);
const FolderIcon = () => (
  <svg width="22" height="19" viewBox="0 0 22 19">
    <path d="M0 0h9l1.500 2H21v16H0z" fill="#e9a820" />
    <path d="M0 4l9-1.500h13V18H0z" fill="#fdd05c" />
    <path d="M4 10h14v8h-4v-4H8v4H4z" fill="#3f97e0" />
  </svg>
);
const StoreIcon = () => (
  <svg width="23" height="24" viewBox="0 0 23 24">
    <path d="M7.500 6V4a3 3 0 016 0v2M9.500 6V4a3 3 0 016 0v2" fill="none" stroke="#fff" strokeWidth="1.200" />
    <path d="M.5 6h22v16q0 1.500-1.500 1.500H2Q.5 23.500.5 22z" fill="#fff" />
    <path d="M6.500 9h5v5h-5z" fill="#f25022" /><path d="M12.500 9h5v5h-5z" fill="#7fba00" /><path d="M6.500 15h5v5h-5z" fill="#00a4ef" /><path d="M12.500 15h5v5h-5z" fill="#ffb900" />
  </svg>
);
const BookIcon = () => (
  <svg width="20" height="21" viewBox="0 0 20 21">
    <rect width="20" height="21" rx="4" fill="#e02c26" />
    <path d="M2 5.500q5-1.500 8 .5 3-2 8-.5v10q-5-1.200-8 .8-3-2-8-.8z" fill="#fff" />
    <path d="M10 6v10.500" stroke="#e02c26" strokeWidth=".8" />
  </svg>
);
const FaceIcon = () => (
  <svg width="19" height="23" viewBox="0 0 19 23">
    <path d="M1 1h14q-1 3 0 6l4 8-5 1v6.500H1z" fill="#e2442a" />
    <path d="M5 6q4-3 7 0-3 3-7 0z" fill="#3b3f4c" /><circle cx="8.500" cy="6" r="1.200" fill="#aaa" />
    <path d="M6 12q2 4 9 3" stroke="#3a1613" fill="none" strokeWidth="1.200" />
  </svg>
);
const MailIcon = () => (
  <svg width="24" height="23" viewBox="0 0 24 23">
    <path d="M0 8L12 0l12 8v3H0z" fill="#0f62b4" />
    <path d="M0 8l12 7.500L24 8v15H0z" fill="#2aa9ef" />
    <path d="M0 23L24 8v15z" fill="#4cc3f7" opacity=".6" />
    <path d="M2 7.500h20L12 15.500z" fill="#f3f3f3" />
  </svg>
);
const SailIcon = () => (
  <svg width="24" height="24" viewBox="0 0 24 24">
    <rect width="24" height="24" fill="#c9d6e2" />
    <path d="M0 0h24v13L0 16z" fill="#1f4467" />
    <path d="M0 0h13v8L0 13z" fill="#7d9ab3" opacity=".6" />
    <path d="M14 2q1 8 5 13h-10q5-5 5-13z" fill="#fff" /><path d="M7 6q1 6 3 9H3q4-4 4-9zM19 7q1 5 4 8h-5z" fill="#e8edf3" />
    <path d="M0 17q12 3 24-1-3 8-12 8Q4 24 0 17z" fill="#5c7288" /><path d="M3 20q10 3 19-1l-4 4q-8 3-15-3z" fill="#fff" />
  </svg>
);
const VsIcon = () => (
  <svg width="24" height="22" viewBox="0 0 24 22">
    <path d="M0 1l13 8v4L0 21z" fill="#6b48b8" /><path d="M24 0L10 9v4l14 9z" fill="#cdbfe3" /><path d="M0 1l15 10L0 21l3-9z" fill="#8b6ad3" /><path d="M24 0v22l-5-3V4z" fill="#e8e0f2" />
  </svg>
);
const ExcelIcon = () => (
  <svg width="23" height="23" viewBox="0 0 23 23">
    <path d="M4 1.500h14l-1 19H1.500z" fill="#eef7e8" stroke="#74bc55" strokeWidth="1.600" />
    <rect x="8" y="6" width="14" height="14" fill="#fff" stroke="#4c9a38" />
    <path d="M8 10.500h14M8 15h14M13 6v14M17.500 6v14" stroke="#4c9a38" strokeWidth="1.300" />
    <path d="M3.500 5h9v11h-9z" fill="#d8efc9" /><path d="M5 6l6 8.500M11.500 6L5 14.500" stroke="#2d6e23" strokeWidth="2.400" />
  </svg>
);
const ChromeIcon = () => (
  <svg width="26" height="26" viewBox="0 0 26 26">
    <circle cx="11.500" cy="12" r="11" fill="#fbc116" />
    <path d="M11.500 12L2 6.500A11 11 0 0011 23z" fill="#2da94f" />
    <path d="M2 6.500A11 11 0 0121.200 7H11.500v5z" fill="#e33b2e" />
    <circle cx="11.500" cy="12" r="5.200" fill="#fff" /><circle cx="11.500" cy="12" r="4.200" fill="#4086f4" />
    <circle cx="18" cy="18" r="7.500" fill="#120e0d" /><path d="M17 14q3-1 3.500 2l-1 4-3-1z" fill="#c08f72" /><path d="M16 23l2-2 2 2-1 2h-2z" fill="#c22a22" />
  </svg>
);

const APPS = [
  ["Edge", EdgeIcon],
  ["File Explorer", FolderIcon],
  ["Microsoft Store", StoreIcon],
  ["Reader", BookIcon],
  ["Face", FaceIcon],
  ["Mail", MailIcon],
  ["Sail", SailIcon],
  ["Visual Studio", VsIcon],
];

const Taskbar = () => (
  <div className="flex h-10 shrink-0 bg-[linear-gradient(90deg,#21353c,#203340_60%,#1b2838)] text-white">
    <button aria-label="Start" className="flex w-12 items-center justify-center">
      <svg width="16" height="16" viewBox="0 0 16 16" fill="#fff"><path d="M0 2.300L7 1.300v6.300H0zM8 1.200L16 0v7.600H8zM0 8.500h7v6.300l-7-1zM8 8.500h8V16l-8-1.200z" /></svg>
    </button>
    <label className="flex w-[344px] items-center border border-[#b9bcbe] bg-[#f2f2f2] pl-[11px]">
      <svg width="17" height="17" viewBox="0 0 17 17" fill="none" stroke="#222" strokeWidth="1.300"><circle cx="10.500" cy="6.500" r="5.500" /><path d="M6.500 10.500L.5 16.500" /></svg>
      <input type="search" aria-label="Search" placeholder="Type here to search" className="ml-[11px] min-w-0 flex-1 bg-transparent text-[14px] outline-none placeholder:text-[#3b3b3b]" />
    </label>
    <button aria-label="Cortana" className="flex w-[48px] items-center justify-center">
      <svg width="16" height="16" viewBox="0 0 16 16" fill="none" stroke="#fff" strokeWidth="2"><circle cx="8" cy="8" r="6.700" /></svg>
    </button>
    {APPS.map(([name, Icon]) => (
      <button key={name} aria-label={name} className="flex w-[49px] items-center justify-center pl-[2px]"><Icon /></button>
    ))}
    <button aria-label="Excel" className="ml-[3px] flex w-[47px] items-center justify-center border-b-2 border-[#76b9ed] bg-[#4b5a64]"><ExcelIcon /></button>
    <button aria-label="Chrome" className="ml-[5px] flex w-[40px] items-center justify-center border-b-2 border-[#76b9ed] pl-1"><ChromeIcon /></button>
    <div className="ml-auto flex items-center">
      <button aria-label="Monitor" className="mr-[23px]">
        <svg width="31" height="31" viewBox="0 0 31 31" fill="none"><circle cx="15.500" cy="15.500" r="14" fill="#1f9463" stroke="#fff" strokeWidth="2.200" /><path d="M2 16h6l2-4 2.500 9L15.500 7l3 15 2.500-11 2 5h6" stroke="#fff" strokeWidth="1.700" /></svg>
      </button>
      <button aria-label="Show hidden icons" className="mr-[11px]">
        <svg width="12" height="8" viewBox="0 0 12 8" fill="none" stroke="#fff" strokeWidth="1.300"><path d="M.5 7L6 1.500 11.500 7" /></svg>
      </button>
      <button aria-label="Battery" className="mr-[7px]">
        <svg width="16" height="12" viewBox="0 0 16 12" fill="none" stroke="#fff"><path d="M6.500 3.500h7.500v7H4.500V8M14.500 5.500h1v3h-1" /><path d="M7 5h6v4H7z" fill="#fff" stroke="none" /><path d="M1 .5v2M4.500.5v2M.5 2.500h4.500v2L2.700 6.500.5 4.500zM2.700 6.500V11" /></svg>
      </button>
      <button aria-label="Volume" className="mr-[8px]">
        <svg width="17" height="14" viewBox="0 0 17 14" fill="none" stroke="#fff"><path d="M.5 4.500h2.500l4-3.500v12l-4-3.500H.5zM9 5q1.500 2 0 4M11.200 3.200q3 3.800 0 7.600M13.400 1.400q4.500 5.600 0 11.200" /></svg>
      </button>
      <div className="w-[56px] whitespace-nowrap text-center text-[11px] leading-[18px]">
        <div>10:58 AM</div>
        <div>7/22/2020</div>
      </div>
      <button aria-label="Notifications" className="ml-[15px] mr-[19px]">
        <svg width="17" height="16" viewBox="0 0 17 16" fill="none" stroke="#fff" strokeWidth="1.200"><path d="M.6.600h15.800v11.800H11l-2.500 3v-3H.6z" /></svg>
      </button>
      <span className="mr-1 h-10 w-px bg-[#5d6871]" />
    </div>
  </div>
);

export default function App() {
  return (
    <div className={"flex h-screen min-h-[768px] flex-col overflow-hidden bg-[#bfdbff] text-[11px] " + UI}>
      <TitleBar />
      <TabBar />
      <Ribbon />
      <FormulaBar />
      <main className="flex min-h-0 flex-1 border-t border-[#6a8cb8] bg-[#bfdbff]">
        <Sheet />
        <VScroll />
      </main>
      <SheetTabs />
      <StatusBar />
      <Taskbar />
    </div>
  );
}
